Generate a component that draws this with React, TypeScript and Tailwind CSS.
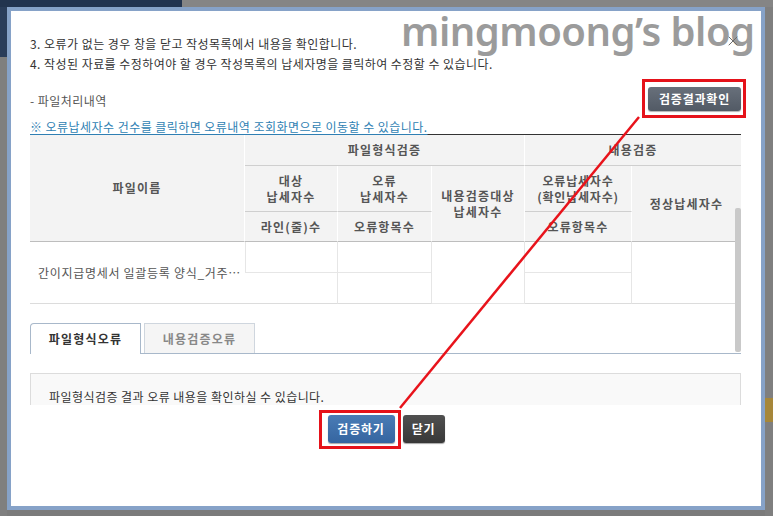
import { X } from "lucide-react";

const KR = "font-['Noto_Sans_CJK_KR',sans-serif]";

function HeadCell({ className, children }: { className: string; children: React.ReactNode }) {
  return (
    <div className={`flex items-center justify-center text-center font-bold leading-[16px] tracking-[1.2px] text-[#555] ${className}`}>
      {children}
    </div>
  );
}

export default function App() {
  return (
    <div className={`relative h-[516px] w-[773px] overflow-hidden bg-[#7b7b7b] text-[12px] tracking-[0.45px] ${KR}`}>
      {/* dimmed page behind the popup */}
      <div className="flex h-full flex-col">
        <div className="flex h-[7px]">
          <div className="w-[182px] bg-[#22344f]" />
          <div className="flex-1 bg-[#858585]" />
        </div>
        <div className="flex flex-1">
          <div className="flex w-[7px] flex-col">
            <div className="h-[50px] bg-[#2a3d5a]" />
            <div className="flex-1 bg-[#7f7f7f]" />
          </div>
          <div className="flex-1" />
          <div className="flex w-[8px] flex-col">
            <div className="h-[391px] bg-[#7f7f7f]" />
            <div className="h-[24px] bg-[#a6873a]" />
            <div className="flex-1 bg-[#7f7f7f]" />
          </div>
        </div>
      </div>

      {/* popup */}
      <div className="absolute left-[7px] top-[7px] h-[503px] w-[758px] border-4 border-[#86a2c8] bg-white">
        <div className="relative h-[394px] overflow-hidden pl-[19px] pr-[20px] pt-[23px]">
          <p className="h-[20px] leading-[20px] text-[#333]">3. 오류가 없는 경우 창을 닫고 작성목록에서 내용을 확인합니다.</p>
          <p className="h-[20px] leading-[20px] text-[#333]">4. 작성된 자료를 수정하여야 할 경우 작성목록의 납세자명을 클릭하여 수정할 수 있습니다.</p>

          <div className="mt-[13px] flex h-[24px] items-end justify-between">
            <span className="h-[20px] leading-[20px] text-[#555]">- 파일처리내역</span>
            <span className="relative">
              <button className="h-[24px] w-[93px] rounded-[3px] bg-gradient-to-b from-[#68707b] to-[#525a65] font-bold tracking-[0.8px] text-white shadow-[0_1px_1px_rgba(0,0,0,0.3)]">
                검증결과확인
              </button>
              <span className="absolute -bottom-[7px] -left-[6px] -right-[5px] -top-[8px] border-[3px] border-[#e5121a]" />
            </span>
          </div>

          <div className="h-[23px] leading-[31px]">
            <span className="text-[#2f7fb3] underline underline-offset-2">※ 오류납세자수 건수를 클릭하면 오류내역 조회화면으로 이동할 수 있습니다.</span>
          </div>

          {/* table */}
          <div className="border-t border-[#333]">
            <div className="grid grid-cols-[215px_93px_94px_93px_107px_1fr] grid-rows-[31px_46px_30px] bg-[#f3f3f3]">
              <HeadCell className="row-span-3 border-b border-r border-b-[#bdbdbd] border-r-white">파일이름</HeadCell>
              <HeadCell className="col-span-3 border-b border-r border-b-[#cfcfcf] border-r-white">파일형식검증</HeadCell>
              <HeadCell className="col-span-2 border-b border-b-[#cfcfcf]">내용검증</HeadCell>
              <HeadCell className="border-b border-r border-b-[#cfcfcf] border-r-white">
                대상
                <br />
                납세자수
              </HeadCell>
              <HeadCell className="border-b border-r border-b-[#cfcfcf] border-r-white">
                오류
                <br />
                납세자수
              </HeadCell>
              <HeadCell className="row-span-2 border-b border-r border-b-[#bdbdbd] border-r-white">
                내용검증대상
                <br />
                납세자수
              </HeadCell>
              <HeadCell className="border-b border-r border-b-[#cfcfcf] border-r-white !tracking-[0.8px]">
                오류납세자수
                <br />
                (확인납세자수)
              </HeadCell>
              <HeadCell className="row-span-2 border-b border-b-[#bdbdbd]">정상납세자수</HeadCell>
              <HeadCell className="border-b border-r border-b-[#bdbdbd] border-r-white">라인(줄)수</HeadCell>
              <HeadCell className="border-b border-r border-b-[#bdbdbd] border-r-white">오류항목수</HeadCell>
              <HeadCell className="border-b border-r border-b-[#bdbdbd] border-r-white">오류항목수</HeadCell>
            </div>
            <div className="grid grid-cols-[215px_93px_94px_93px_107px_1fr] grid-rows-[31px_31px]">
              <div className="row-span-2 flex items-center overflow-hidden whitespace-nowrap border-b border-[#dcdcdc] pl-[8px] tracking-[0.7px] text-[#555]">
                간이지급명세서 일괄등록 양식_거주…
              </div>
              <div className="border-b border-l border-r border-[#e6e6e6]" />
              <div className="border-b border-r border-[#e6e6e6]" />
              <div className="row-span-2 border-b border-r border-[#e6e6e6]" />
              <div className="border-b border-r border-[#e6e6e6]" />
              <div className="row-span-2 border-b border-[#dcdcdc]" />
              <div className="border-b border-r border-[#e6e6e6] border-b-[#dcdcdc]" />
              <div className="border-b border-r border-[#e6e6e6] border-b-[#dcdcdc]" />
              <div className="border-b border-r border-[#e6e6e6] border-b-[#dcdcdc]" />
            </div>
          </div>

          {/* tabs */}
          <div className="mt-[19px] flex h-[31px] items-end gap-[3px] border-b border-[#a8b8ca]">
            <div className="-mb-px flex h-[31px] w-[111px] items-center justify-center rounded-tl-[4px] border border-b-0 border-[#a8b8ca] bg-white font-bold tracking-[1.2px] text-[#333]">
              파일형식오류
            </div>
            <div className="flex h-[30px] w-[111px] items-center justify-center border border-b-0 border-[#cfd6de] bg-[#f5f5f5] font-bold tracking-[1.2px] text-[#888]">
              내용검증오류
            </div>
          </div>

          <div className="mt-[19px] border border-[#dcdcdc] bg-[#f9f9f9] pb-[12px] pl-[18px] pt-[13px] leading-[20px] text-[#333]">
            파일형식검증 결과 오류 내용을 확인하실 수 있습니다.
          </div>

          {/* scroll thumb */}
          <div className="absolute left-[724px] top-[197px] h-[144px] w-[6px] rounded-[2px] bg-[#c9c9c9]" />
        </div>

        <div className="mt-[10px] flex justify-center gap-[8px]">
          <span className="relative">
            <button className="h-[28px] w-[67px] rounded-[3px] bg-gradient-to-b from-[#4a7cb6] to-[#3565a0] font-bold tracking-[0.8px] text-white shadow-[0_1px_1px_rgba(0,0,0,0.35)]">
              검증하기
            </button>
            <span className="absolute -bottom-[6px] -left-[9px] -right-[6px] -top-[5px] border-[3px] border-[#e5121a]" />
          </span>
          <button className="h-[28px] w-[42px] rounded-[3px] bg-gradient-to-b from-[#505050] to-[#383838] font-bold tracking-[0.8px] text-white shadow-[0_1px_1px_rgba(0,0,0,0.35)]">
            닫기
          </button>
        </div>

        {/* watermark and close */}
        <div className="absolute left-[390px] top-0 whitespace-nowrap font-['Noto_Sans',sans-serif] text-[40px] font-semibold leading-[40px] tracking-[-0.5px] text-[#9b9b9b]">
          mingmoong’s blog
        </div>
        <X className="absolute left-[714px] top-[22px] h-[16px] w-[16px] text-[#6b6b6b]" strokeWidth={1.5} />
      </div>

      {/* annotation arrow */}
      <svg className="pointer-events-none absolute inset-0" width="773" height="516" viewBox="0 0 773 516">
        <line x1="400" y1="408" x2="639" y2="117" stroke="#e8131b" strokeWidth="2.5" />
      </svg>
    </div>
  );
}
